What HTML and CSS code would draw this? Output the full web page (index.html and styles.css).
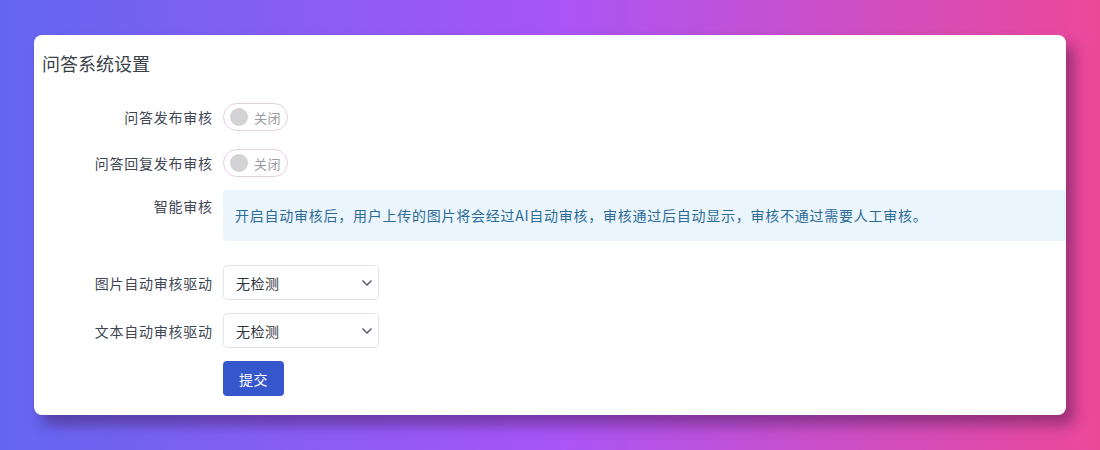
FILE: index.html
```html
<!DOCTYPE html>
<html lang="zh-CN">
<head>
    <meta charset="UTF-8">
    <meta name="viewport" content="width=device-width, initial-scale=1.0">
    <title>问答系统设置</title>
    <link rel="stylesheet" href="styles.css">
</head>
<body>

<div class="card">
    <h1 class="card-title">问答系统设置</h1>

    <form class="settings-form" onsubmit="return false;">
        <div class="form-row row-switch">
            <label class="form-label">问答发布审核</label>
            <div class="form-control">
                <span class="switch"><span class="switch-knob"></span><span class="switch-text">关闭</span></span>
            </div>
        </div>

        <div class="form-row row-switch2">
            <label class="form-label">问答回复发布审核</label>
            <div class="form-control">
                <span class="switch"><span class="switch-knob"></span><span class="switch-text">关闭</span></span>
            </div>
        </div>

        <div class="form-row row-info">
            <label class="form-label label-top">智能审核</label>
            <div class="form-control">
                <div class="info-box">开启自动审核后，用户上传的图片将会经过AI自动审核，审核通过后自动显示，审核不通过需要人工审核。</div>
            </div>
        </div>

        <div class="form-row row-select">
            <label class="form-label">图片自动审核驱动</label>
            <div class="form-control">
                <div class="select-wrap">
                    <select class="select">
                        <option>无检测</option>
                    </select>
                    <svg class="select-arrow" width="12" height="8" viewBox="0 0 12 8"><path d="M1.5 1.5 L6 6 L10.5 1.5" fill="none" stroke="#4a5264" stroke-width="1.3"/></svg>
                </div>
            </div>
        </div>

        <div class="form-row row-select">
            <label class="form-label">文本自动审核驱动</label>
            <div class="form-control">
                <div class="select-wrap">
                    <select class="select">
                        <option>无检测</option>
                    </select>
                    <svg class="select-arrow" width="12" height="8" viewBox="0 0 12 8"><path d="M1.5 1.5 L6 6 L10.5 1.5" fill="none" stroke="#4a5264" stroke-width="1.3"/></svg>
                </div>
            </div>
        </div>

        <div class="form-row">
            <span class="form-label"></span>
            <div class="form-control">
                <button class="btn-submit" type="submit">提交</button>
            </div>
        </div>
    </form>
</div>

</body>
</html>
```

FILE: styles.css
```css
body {
    margin: 0;
    height: 450px;
    padding: 35px 34px 0;
    box-sizing: border-box;
    font-family: "Noto Sans CJK SC", "Noto Sans", sans-serif;
    background: linear-gradient(90deg, #6366f1 0%, #a855f7 50%, #ec4899 100%);
    overflow: hidden;
}
.card {
    width: 1032px;
    height: 380px;
    box-sizing: border-box;
    padding: 15px 0 0 8px;
    background-color: #fff;
    border-radius: 8px;
    box-shadow: 8px 10px 14px rgba(60, 20, 70, 0.45);
    overflow: hidden;
}
.card-title {
    margin: 0 0 27px;
    font-size: 18px;
    line-height: 26px;
    font-weight: 400;
    color: #3a3f4a;
}
.form-row {
    display: grid;
    grid-template-columns: 170px 1fr;
    column-gap: 11px;
    align-items: center;
    margin-bottom: 13px;
}
.row-switch {
    margin-bottom: 18px;
}
.row-info {
    align-items: start;
    margin-bottom: 24px;
}
.form-label {
    text-align: right;
    font-size: 14px;
    line-height: 20px;
    letter-spacing: 0.75px;
    margin-right: -0.75px;
    color: #404653;
}
.label-top {
    padding-top: 6px;
}
.form-control {
    display: flex;
    align-items: center;
}
.switch {
    display: flex;
    align-items: center;
    width: 65px;
    height: 28px;
    box-sizing: border-box;
    border: 1px solid #e4cfdf;
    border-radius: 14px;
    padding-left: 6px;
}
.switch-knob {
    width: 18px;
    height: 18px;
    border-radius: 50%;
    background-color: #d3d3d6;
}
.switch-text {
    margin-left: 6px;
    font-size: 13px;
    letter-spacing: 0.5px;
    color: #9a9aa0;
}
.info-box {
    flex: 1;
    height: 51px;
    line-height: 51px;
    padding-left: 12px;
    background-color: #eaf5fd;
    border-radius: 4px 0 0 4px;
    font-size: 14px;
    letter-spacing: 0.75px;
    color: #2d6b96;
    white-space: nowrap;
}
.select-wrap {
    position: relative;
    width: 156px;
}
.select {
    width: 100%;
    height: 35px;
    padding: 0 12px;
    border: 1px solid #e2e5ec;
    border-radius: 4px;
    background-color: #fff;
    font-family: inherit;
    font-size: 14px;
    letter-spacing: 0.5px;
    color: #2f333b;
    appearance: none;
    -webkit-appearance: none;
}
.select-arrow {
    position: absolute;
    right: 6px;
    top: 14px;
    pointer-events: none;
}
.btn-submit {
    width: 61px;
    height: 35px;
    border: none;
    border-radius: 4px;
    background-color: #3656cc;
    color: #fff;
    font-family: inherit;
    font-size: 14px;
    letter-spacing: 0.5px;
    cursor: pointer;
}
```
